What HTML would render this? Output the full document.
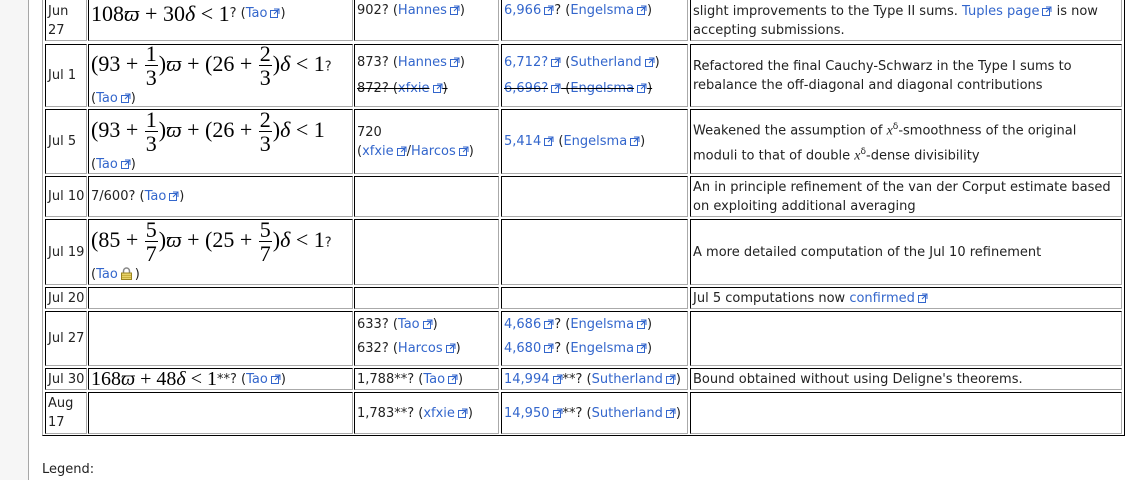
<!DOCTYPE html>
<html><head><meta charset="utf-8"><style>
body{margin:0;width:1134px;height:480px;overflow:hidden;background:#fff;font-family:"DejaVu Sans","Liberation Sans",sans-serif;font-size:13px;color:#222;position:relative}
#side{position:absolute;left:0;top:0;width:28px;height:480px;background:#f6f6f6;border-right:1px solid #a7a7a7}
#tbl{position:absolute;left:42px;top:-30px;width:1081px;height:464px;border:1px solid;border-color:#aaa #000 #000 #aaa}
.c{position:absolute;box-sizing:border-box;border:1px solid;border-color:#000 #aaa #aaa #000;display:flex;align-items:center;padding:0 2px;line-height:19px;white-space:nowrap}
.w{white-space:normal}
a{color:#3366cc;text-decoration:none}
.e{display:inline-block;width:10px;height:10px;margin-left:3px;vertical-align:-1px}
.m{font-family:"Liberation Serif","DejaVu Serif",serif;font-size:22px;color:#000;white-space:nowrap}
.m i{font-style:italic}
.f{display:inline-block;vertical-align:middle;text-align:center;line-height:23px;margin:0 1px;min-width:13px}
.f span{display:block}
.f span:first-child{border-bottom:1px solid #000}
.s{text-decoration:line-through;text-decoration-color:#000}
#leg{position:absolute;left:42px;top:462px}
</style></head><body>
<div id="side"></div>
<div id="tbl"></div>
<div class="c" style="left:45px;top:-20px;width:42px;height:61px;align-items:flex-end;padding-bottom:0"><div>Jun<br>27</div></div>
<div class="c" style="left:88px;top:-20px;width:265px;height:61px;align-items:flex-end;padding-bottom:17px"><span class="m">108<i>ϖ</i> + 30<i>δ</i> &lt; 1</span>? (<a>Tao<svg class="e" viewBox="0 0 10 10"><rect x="0.5" y="2.5" width="7" height="7" fill="none" stroke="#36c"/><path d="M4 1h5v5M9 1L4 6" stroke="#36c" fill="none"/></svg></a>)</div>
<div class="c" style="left:354px;top:-20px;width:145px;height:61px;align-items:flex-end;padding-bottom:20px">902? (<a>Hannes<svg class="e" viewBox="0 0 10 10"><rect x="0.5" y="2.5" width="7" height="7" fill="none" stroke="#36c"/><path d="M4 1h5v5M9 1L4 6" stroke="#36c" fill="none"/></svg></a>)</div>
<div class="c" style="left:501px;top:-20px;width:187px;height:61px;align-items:flex-end;padding-bottom:20px"><a>6,966<svg class="e" viewBox="0 0 10 10"><rect x="0.5" y="2.5" width="7" height="7" fill="none" stroke="#36c"/><path d="M4 1h5v5M9 1L4 6" stroke="#36c" fill="none"/></svg></a>? (<a>Engelsma<svg class="e" viewBox="0 0 10 10"><rect x="0.5" y="2.5" width="7" height="7" fill="none" stroke="#36c"/><path d="M4 1h5v5M9 1L4 6" stroke="#36c" fill="none"/></svg></a>)</div>
<div class="c w" style="left:690px;top:-20px;width:432px;height:61px;align-items:flex-end;padding-bottom:0"><div>slight improvements to the Type II sums. <a>Tuples page<svg class="e" viewBox="0 0 10 10"><rect x="0.5" y="2.5" width="7" height="7" fill="none" stroke="#36c"/><path d="M4 1h5v5M9 1L4 6" stroke="#36c" fill="none"/></svg></a> is now accepting submissions.</div></div>

<div class="c" style="left:45px;top:44px;width:42px;height:63px">Jul 1</div>
<div class="c" style="left:88px;top:44px;width:265px;height:63px;align-items:flex-start"><div style="line-height:20px;margin-top:-3px"><span class="m">(93 + <span class="f"><span>1</span><span>3</span></span>)<i>ϖ</i> + (26 + <span class="f"><span>2</span><span>3</span></span>)<i>δ</i> &lt; 1</span>?<br>(<a>Tao<svg class="e" viewBox="0 0 10 10"><rect x="0.5" y="2.5" width="7" height="7" fill="none" stroke="#36c"/><path d="M4 1h5v5M9 1L4 6" stroke="#36c" fill="none"/></svg></a>)</div></div>
<div class="c" style="left:354px;top:44px;width:145px;height:63px"><div style="line-height:26px">873? (<a>Hannes<svg class="e" viewBox="0 0 10 10"><rect x="0.5" y="2.5" width="7" height="7" fill="none" stroke="#36c"/><path d="M4 1h5v5M9 1L4 6" stroke="#36c" fill="none"/></svg></a>)<br><span class="s">872? (<a>xfxie<svg class="e" viewBox="0 0 10 10"><rect x="0.5" y="2.5" width="7" height="7" fill="none" stroke="#36c"/><path d="M4 1h5v5M9 1L4 6" stroke="#36c" fill="none"/></svg></a>)</span></div></div>
<div class="c" style="left:501px;top:44px;width:187px;height:63px"><div style="line-height:26px"><a>6,712?<svg class="e" viewBox="0 0 10 10"><rect x="0.5" y="2.5" width="7" height="7" fill="none" stroke="#36c"/><path d="M4 1h5v5M9 1L4 6" stroke="#36c" fill="none"/></svg></a> (<a>Sutherland<svg class="e" viewBox="0 0 10 10"><rect x="0.5" y="2.5" width="7" height="7" fill="none" stroke="#36c"/><path d="M4 1h5v5M9 1L4 6" stroke="#36c" fill="none"/></svg></a>)<br><span class="s"><a>6,696?<svg class="e" viewBox="0 0 10 10"><rect x="0.5" y="2.5" width="7" height="7" fill="none" stroke="#36c"/><path d="M4 1h5v5M9 1L4 6" stroke="#36c" fill="none"/></svg></a> (<a>Engelsma<svg class="e" viewBox="0 0 10 10"><rect x="0.5" y="2.5" width="7" height="7" fill="none" stroke="#36c"/><path d="M4 1h5v5M9 1L4 6" stroke="#36c" fill="none"/></svg></a>)</span></div></div>
<div class="c w" style="left:690px;top:44px;width:432px;height:63px"><div>Refactored the final Cauchy-Schwarz in the Type I sums to rebalance the off-diagonal and diagonal contributions</div></div>

<div class="c" style="left:45px;top:109px;width:42px;height:65px">Jul 5</div>
<div class="c" style="left:88px;top:109px;width:265px;height:65px;align-items:flex-start"><div style="line-height:20px;margin-top:-2px"><span class="m">(93 + <span class="f"><span>1</span><span>3</span></span>)<i>ϖ</i> + (26 + <span class="f"><span>2</span><span>3</span></span>)<i>δ</i> &lt; 1</span><br>(<a>Tao<svg class="e" viewBox="0 0 10 10"><rect x="0.5" y="2.5" width="7" height="7" fill="none" stroke="#36c"/><path d="M4 1h5v5M9 1L4 6" stroke="#36c" fill="none"/></svg></a>)</div></div>
<div class="c" style="left:354px;top:109px;width:145px;height:65px"><div>720<br>(<a>xfxie<svg class="e" viewBox="0 0 10 10"><rect x="0.5" y="2.5" width="7" height="7" fill="none" stroke="#36c"/><path d="M4 1h5v5M9 1L4 6" stroke="#36c" fill="none"/></svg></a>/<a>Harcos<svg class="e" viewBox="0 0 10 10"><rect x="0.5" y="2.5" width="7" height="7" fill="none" stroke="#36c"/><path d="M4 1h5v5M9 1L4 6" stroke="#36c" fill="none"/></svg></a>)</div></div>
<div class="c" style="left:501px;top:109px;width:187px;height:65px"><a>5,414<svg class="e" viewBox="0 0 10 10"><rect x="0.5" y="2.5" width="7" height="7" fill="none" stroke="#36c"/><path d="M4 1h5v5M9 1L4 6" stroke="#36c" fill="none"/></svg></a>&nbsp;(<a>Engelsma<svg class="e" viewBox="0 0 10 10"><rect x="0.5" y="2.5" width="7" height="7" fill="none" stroke="#36c"/><path d="M4 1h5v5M9 1L4 6" stroke="#36c" fill="none"/></svg></a>)</div>
<div class="c w" style="left:690px;top:109px;width:432px;height:65px"><div style="line-height:21px">Weakened the assumption of <i style="font-family:'Liberation Serif',serif;font-size:14px">x</i><sup style="font-size:9px">δ</sup>-smoothness of the original moduli to that of double <i style="font-family:'Liberation Serif',serif;font-size:14px">x</i><sup style="font-size:9px">δ</sup>-dense divisibility</div></div>

<div class="c" style="left:45px;top:176px;width:42px;height:41px">Jul 10</div>
<div class="c" style="left:88px;top:176px;width:265px;height:41px">7/600? (<a>Tao<svg class="e" viewBox="0 0 10 10"><rect x="0.5" y="2.5" width="7" height="7" fill="none" stroke="#36c"/><path d="M4 1h5v5M9 1L4 6" stroke="#36c" fill="none"/></svg></a>)</div>
<div class="c" style="left:354px;top:176px;width:145px;height:41px"></div>
<div class="c" style="left:501px;top:176px;width:187px;height:41px"></div>
<div class="c w" style="left:690px;top:176px;width:432px;height:41px"><div>An in principle refinement of the van der Corput estimate based on exploiting additional averaging</div></div>

<div class="c" style="left:45px;top:219px;width:42px;height:66px">Jul 19</div>
<div class="c" style="left:88px;top:219px;width:265px;height:66px;align-items:flex-start"><div style="line-height:20px;margin-top:-2px"><span class="m">(85 + <span class="f"><span>5</span><span>7</span></span>)<i>ϖ</i> + (25 + <span class="f"><span>5</span><span>7</span></span>)<i>δ</i> &lt; 1</span>?<br>(<a>Tao</a><svg width="13" height="13" viewBox="0 0 13 13" style="vertical-align:-2px;margin:0 2px"><path d="M3.5 6V4a3 3 0 0 1 6 0v2" fill="none" stroke="#888" stroke-width="1.5"/><rect x="1.5" y="6" width="10" height="6.5" fill="#e8d36a" stroke="#9a8420"/><path d="M2 8.5h9M2 10.5h9" stroke="#c9b040"/></svg>)</div></div>
<div class="c" style="left:354px;top:219px;width:145px;height:66px"></div>
<div class="c" style="left:501px;top:219px;width:187px;height:66px"></div>
<div class="c w" style="left:690px;top:219px;width:432px;height:66px">A more detailed computation of the Jul 10 refinement</div>

<div class="c" style="left:45px;top:287px;width:42px;height:22px">Jul 20</div>
<div class="c" style="left:88px;top:287px;width:265px;height:22px"></div>
<div class="c" style="left:354px;top:287px;width:145px;height:22px"></div>
<div class="c" style="left:501px;top:287px;width:187px;height:22px"></div>
<div class="c" style="left:690px;top:287px;width:432px;height:22px">Jul 5 computations now&nbsp;<a>confirmed<svg class="e" viewBox="0 0 10 10"><rect x="0.5" y="2.5" width="7" height="7" fill="none" stroke="#36c"/><path d="M4 1h5v5M9 1L4 6" stroke="#36c" fill="none"/></svg></a></div>

<div class="c" style="left:45px;top:311px;width:42px;height:55px">Jul 27</div>
<div class="c" style="left:88px;top:311px;width:265px;height:55px"></div>
<div class="c" style="left:354px;top:311px;width:145px;height:55px"><div style="line-height:24px;margin-top:-4px">633? (<a>Tao<svg class="e" viewBox="0 0 10 10"><rect x="0.5" y="2.5" width="7" height="7" fill="none" stroke="#36c"/><path d="M4 1h5v5M9 1L4 6" stroke="#36c" fill="none"/></svg></a>)<br>632? (<a>Harcos<svg class="e" viewBox="0 0 10 10"><rect x="0.5" y="2.5" width="7" height="7" fill="none" stroke="#36c"/><path d="M4 1h5v5M9 1L4 6" stroke="#36c" fill="none"/></svg></a>)</div></div>
<div class="c" style="left:501px;top:311px;width:187px;height:55px"><div style="line-height:24px;margin-top:-4px"><a>4,686<svg class="e" viewBox="0 0 10 10"><rect x="0.5" y="2.5" width="7" height="7" fill="none" stroke="#36c"/><path d="M4 1h5v5M9 1L4 6" stroke="#36c" fill="none"/></svg></a>? (<a>Engelsma<svg class="e" viewBox="0 0 10 10"><rect x="0.5" y="2.5" width="7" height="7" fill="none" stroke="#36c"/><path d="M4 1h5v5M9 1L4 6" stroke="#36c" fill="none"/></svg></a>)<br><a>4,680<svg class="e" viewBox="0 0 10 10"><rect x="0.5" y="2.5" width="7" height="7" fill="none" stroke="#36c"/><path d="M4 1h5v5M9 1L4 6" stroke="#36c" fill="none"/></svg></a>? (<a>Engelsma<svg class="e" viewBox="0 0 10 10"><rect x="0.5" y="2.5" width="7" height="7" fill="none" stroke="#36c"/><path d="M4 1h5v5M9 1L4 6" stroke="#36c" fill="none"/></svg></a>)</div></div>
<div class="c" style="left:690px;top:311px;width:432px;height:55px"></div>

<div class="c" style="left:45px;top:368px;width:42px;height:22px">Jul 30</div>
<div class="c" style="left:88px;top:368px;width:265px;height:22px"><span class="m" style="font-size:20px">168<i>ϖ</i> + 48<i>δ</i> &lt; 1</span>**? (<a>Tao<svg class="e" viewBox="0 0 10 10"><rect x="0.5" y="2.5" width="7" height="7" fill="none" stroke="#36c"/><path d="M4 1h5v5M9 1L4 6" stroke="#36c" fill="none"/></svg></a>)</div>
<div class="c" style="left:354px;top:368px;width:145px;height:22px">1,788**? (<a>Tao<svg class="e" viewBox="0 0 10 10"><rect x="0.5" y="2.5" width="7" height="7" fill="none" stroke="#36c"/><path d="M4 1h5v5M9 1L4 6" stroke="#36c" fill="none"/></svg></a>)</div>
<div class="c" style="left:501px;top:368px;width:187px;height:22px"><a>14,994<svg class="e" viewBox="0 0 10 10"><rect x="0.5" y="2.5" width="7" height="7" fill="none" stroke="#36c"/><path d="M4 1h5v5M9 1L4 6" stroke="#36c" fill="none"/></svg></a>**? (<a>Sutherland<svg class="e" viewBox="0 0 10 10"><rect x="0.5" y="2.5" width="7" height="7" fill="none" stroke="#36c"/><path d="M4 1h5v5M9 1L4 6" stroke="#36c" fill="none"/></svg></a>)</div>
<div class="c" style="left:690px;top:368px;width:432px;height:22px">Bound obtained without using Deligne's theorems.</div>

<div class="c" style="left:45px;top:392px;width:42px;height:42px"><div>Aug<br>17</div></div>
<div class="c" style="left:88px;top:392px;width:265px;height:42px"></div>
<div class="c" style="left:354px;top:392px;width:145px;height:42px">1,783**? (<a>xfxie<svg class="e" viewBox="0 0 10 10"><rect x="0.5" y="2.5" width="7" height="7" fill="none" stroke="#36c"/><path d="M4 1h5v5M9 1L4 6" stroke="#36c" fill="none"/></svg></a>)</div>
<div class="c" style="left:501px;top:392px;width:187px;height:42px"><a>14,950<svg class="e" viewBox="0 0 10 10"><rect x="0.5" y="2.5" width="7" height="7" fill="none" stroke="#36c"/><path d="M4 1h5v5M9 1L4 6" stroke="#36c" fill="none"/></svg></a>**? (<a>Sutherland<svg class="e" viewBox="0 0 10 10"><rect x="0.5" y="2.5" width="7" height="7" fill="none" stroke="#36c"/><path d="M4 1h5v5M9 1L4 6" stroke="#36c" fill="none"/></svg></a>)</div>
<div class="c" style="left:690px;top:392px;width:432px;height:42px"></div>

<div id="leg">Legend:</div>
</body></html>
